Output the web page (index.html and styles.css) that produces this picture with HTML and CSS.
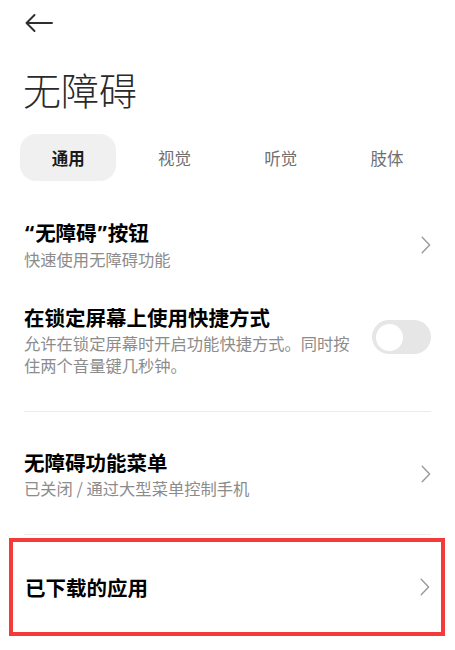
FILE: index.html
```html
<!DOCTYPE html>
<html lang="zh-CN">
<head>
<meta charset="utf-8">
<title>无障碍</title>
<link rel="stylesheet" href="styles.css">
</head>
<body>
<div class="page">
  <div class="header">
    <svg class="back" width="28" height="18" viewBox="0 0 28 18" aria-hidden="true">
      <path d="M27 9 H1.5 M9.5 1 L1.5 9 L9.5 17" fill="none" stroke="#2e2e2e" stroke-width="1.9" stroke-linecap="round" stroke-linejoin="round"/>
    </svg>
  </div>
  <h1 class="title">无障碍</h1>
  <div class="tabs">
    <div class="tab active">通用</div>
    <div class="tab">视觉</div>
    <div class="tab">听觉</div>
    <div class="tab">肢体</div>
  </div>

  <div class="row first">
    <div class="text">
      <div class="row-title"><span class="q">“</span>无障碍<span class="q">”</span>按钮</div>
      <div class="row-sub">快速使用无障碍功能</div>
    </div>
    <svg class="chev" width="10" height="18" viewBox="0 0 10 18" aria-hidden="true"><path d="M1.2 1.2 L8.6 9 L1.2 16.8" fill="none" stroke="#9a9a9a" stroke-width="1.4" stroke-linecap="round" stroke-linejoin="round"/></svg>
  </div>

  <div class="row">
    <div class="text">
      <div class="row-title">在锁定屏幕上使用快捷方式</div>
      <div class="row-sub">允许在锁定屏幕时开启功能快捷方式。同时按住两个音量键几秒钟。</div>
    </div>
    <div class="toggle"><div class="knob"></div></div>
  </div>

  <div class="divider"></div>

  <div class="row">
    <div class="text">
      <div class="row-title">无障碍功能菜单</div>
      <div class="row-sub">已关闭 / 通过大型菜单控制手机</div>
    </div>
    <svg class="chev" width="10" height="18" viewBox="0 0 10 18" aria-hidden="true"><path d="M1.2 1.2 L8.6 9 L1.2 16.8" fill="none" stroke="#9a9a9a" stroke-width="1.4" stroke-linecap="round" stroke-linejoin="round"/></svg>
  </div>

  <div class="divider last"></div>

  <div class="highlight">
    <div class="row-title">已下载的应用</div>
    <svg class="chev" width="10" height="18" viewBox="0 0 10 18" aria-hidden="true"><path d="M1.2 1.2 L8.6 9 L1.2 16.8" fill="none" stroke="#9a9a9a" stroke-width="1.4" stroke-linecap="round" stroke-linejoin="round"/></svg>
  </div>
</div>
</body>
</html>
```
FILE: styles.css
```css
html, body {
  margin: 0;
  padding: 0;
  background: #ffffff;
}
body {
  font-family: "Noto Sans CJK SC", "Noto Sans", sans-serif;
  color: #000;
}
.page {
  width: 455px;
  height: 650px;
  overflow: hidden;
}
.header {
  padding: 14px 0 0 25px;
  height: 18px;
}
.back {
  display: block;
}
.title {
  margin: 34px 0 0 23px;
  font-size: 38px;
  line-height: 46px;
  font-weight: 300;
  color: #2a2a2a;
}
.tabs {
  margin-top: 22px;
  padding: 0 20px;
  display: grid;
  grid-template-columns: repeat(4, 1fr);
  column-gap: 10px;
}
.tab {
  height: 47px;
  display: flex;
  align-items: center;
  justify-content: center;
  font-size: 16.5px;
  color: #707070;
  border-radius: 16px;
}
.tab.active {
  background: #f0f0f0;
  color: #1a1a1a;
  font-weight: 700;
}
.row {
  display: flex;
  align-items: center;
  gap: 14px;
  padding: 17px 24px;
}
.row.first {
  margin-top: 21px;
}
.text {
  flex: 1;
  min-width: 0;
}
.row-title {
  font-size: 20.5px;
  line-height: 26px;
  font-weight: 700;
  color: #000;
}
.q {
  font-family: "Noto Sans", "Liberation Sans", sans-serif;
  font-weight: 700;
  padding: 0 1px;
}
.row-sub {
  margin-top: 2px;
  font-size: 16.3px;
  line-height: 22px;
  color: #8c8c8c;
}
.chev {
  display: block;
  flex: none;
}
.toggle {
  flex: none;
  align-self: flex-start;
  margin-top: 16px;
  width: 59px;
  height: 34px;
  border-radius: 17px;
  background: #e6e6e6;
  display: flex;
  align-items: center;
  padding-left: 4px;
  box-sizing: border-box;
}
.knob {
  width: 27px;
  height: 27px;
  border-radius: 50%;
  background: #ffffff;
}
.divider {
  height: 1px;
  background: #ebebeb;
  margin: 18px 24px 20px;
}
.divider.last {
  margin: 18px 24px 0;
}
.highlight {
  margin: 3px 10px 0 9px;
  height: 90px;
  border: 4px solid #f53a3a;
  display: flex;
  align-items: center;
  justify-content: space-between;
  padding: 0 11px 0 12px;
}
```
